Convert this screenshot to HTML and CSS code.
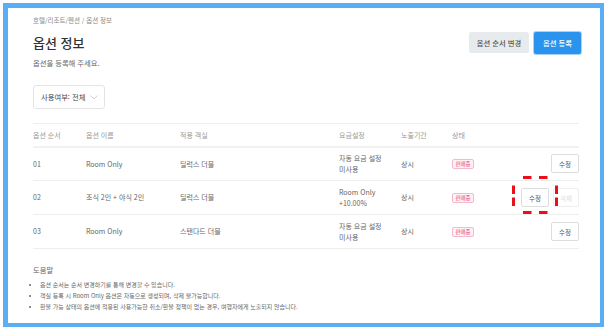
FILE: index.html
```html
<!DOCTYPE html>
<html lang="ko">
<head>
    <meta charset="UTF-8">
    <meta name="viewport" content="width=device-width, initial-scale=1.0">
    <title>옵션 정보</title>
    <link rel="stylesheet" href="styles.css">
</head>
<body>
    <div class="frame">
        <div class="page-head">
            <div>
                <div class="breadcrumb">호텔/리조트/펜션 / 옵션 정보</div>
                <h1>옵션 정보</h1>
                <p class="subtitle">옵션을 등록해 주세요.</p>
            </div>
            <div class="head-actions">
                <button class="btn btn-gray">옵션 순서 변경</button>
                <button class="btn btn-blue">옵션 등록</button>
            </div>
        </div>

        <div class="filter">
            <span>사용여부: 전체</span>
            <svg width="8" height="5" viewBox="0 0 8 5"><path d="M0.5 0.5 L4 4 L7.5 0.5" fill="none" stroke="#c4c4c4" stroke-width="0.8"/></svg>
        </div>

        <table class="option-table">
            <colgroup>
                <col style="width: 53px">
                <col style="width: 94px">
                <col style="width: 159px">
                <col style="width: 62px">
                <col style="width: 51px">
                <col style="width: 60px">
                <col>
            </colgroup>
            <thead>
                <tr>
                    <th>옵션 순서</th>
                    <th>옵션 이름</th>
                    <th>적용 객실</th>
                    <th>요금설정</th>
                    <th>노출기간</th>
                    <th>상태</th>
                    <th></th>
                </tr>
            </thead>
            <tbody>
                <tr>
                    <td>01</td>
                    <td>Room Only</td>
                    <td>딜럭스 더블</td>
                    <td>자동 요금 설정<br>미사용</td>
                    <td>상시</td>
                    <td><span class="badge">판매중</span></td>
                    <td class="actions"><button class="btn-sm">수정</button></td>
                </tr>
                <tr>
                    <td>02</td>
                    <td>조식 2인 + 야식 2인</td>
                    <td>딜럭스 더블</td>
                    <td>Room Only<br>+10.00%</td>
                    <td>상시</td>
                    <td><span class="badge">판매중</span></td>
                    <td class="actions">
                        <span class="highlight">
                            <button class="btn-sm">수정</button>
                            <!-- hand-drawn dashed marker around the edit button -->
                            <svg class="dash-box" width="46" height="38" viewBox="0 0 46 38">
                                <path d="M11 1.5 H19.5 M27 1.5 H35.5 M11 36.5 H19.5 M27 36.5 H35.5 M1.5 9.5 V18 M1.5 21.5 V30 M44.5 9.5 V18 M44.5 21.5 V30" fill="none" stroke="#e8101a" stroke-width="3"/>
                            </svg>
                        </span>
                        <button class="btn-sm disabled">삭제</button>
                    </td>
                </tr>
                <tr>
                    <td>03</td>
                    <td>Room Only</td>
                    <td>스탠다드 더블</td>
                    <td>자동 요금 설정<br>미사용</td>
                    <td>상시</td>
                    <td><span class="badge">판매중</span></td>
                    <td class="actions"><button class="btn-sm">수정</button></td>
                </tr>
            </tbody>
        </table>

        <div class="help">
            <h3>도움말</h3>
            <ul>
                <li>옵션 순서는 순서 변경하기를 통해 변경할 수 있습니다.</li>
                <li>객실 등록 시 Room Only 옵션은 자동으로 생성되며, 삭제 불가능합니다.</li>
                <li>환불 가능 상태의 옵션에 적용된 사용가능한 취소/환불 정책이 없는 경우, 여행자에게 노출되지 않습니다.</li>
            </ul>
        </div>
    </div>
</body>
</html>
```

FILE: styles.css
```css
:root {
    --frame-color: #5aaef3;
    --primary-color: #2a93ee;
    --line-color: #eeeeee;
    --text-color: #666666;
}

* {
    box-sizing: border-box;
}

body {
    font-family: "Noto Sans CJK KR", "Noto Sans", sans-serif;
    color: var(--text-color);
    background-color: #ffffff;
    margin: 0;
}

.frame {
    margin: 3px;
    height: 324px;
    border: 5px solid var(--frame-color);
    border-right-width: 4px;
    border-bottom-width: 4px;
    padding: 7px 19px 0 25px;
    overflow: hidden;
}

.page-head {
    display: flex;
    justify-content: space-between;
    align-items: flex-start;
}

.breadcrumb {
    font-size: 6.5px;
    line-height: 10px;
    color: #8a8a8a;
}

h1 {
    font-size: 13px;
    font-weight: 500;
    line-height: 18px;
    color: #333333;
    margin: 9px 0 0;
}

.subtitle {
    font-size: 7.3px;
    line-height: 10px;
    color: #666666;
    margin: 6px 0 0;
}

.head-actions {
    display: flex;
    gap: 5px;
    margin-top: 17px;
}

.btn {
    border: none;
    font-family: inherit;
    font-size: 7.3px;
    font-weight: 500;
    height: 21px;
    border-radius: 2px;
    padding: 0;
}

.btn-gray {
    width: 60px;
    background-color: #e8ebee;
    color: #555555;
}

.btn-blue {
    width: 47px;
    height: 22px;
    background-color: var(--primary-color);
    color: #ffffff;
    box-shadow: 0 0 0 1px #a6d3fa;
}

.filter {
    width: 72px;
    height: 24px;
    margin-top: 17px;
    border: 1px solid #e4e4e4;
    border-radius: 3px;
    display: flex;
    align-items: center;
    justify-content: space-between;
    padding: 0 6px 0 7px;
    font-size: 7.3px;
    color: #444444;
}

.option-table {
    width: 546px;
    margin-top: 14px;
    border-collapse: collapse;
    table-layout: fixed;
    border-top: 1px solid var(--line-color);
    font-size: 7px;
}

.option-table th {
    height: 23px;
    font-weight: 400;
    color: #999999;
    text-align: left;
    padding: 0;
    border-bottom: 2px solid #f2f2f2;
}

.option-table td {
    height: 34px;
    padding: 0;
    line-height: 10.5px;
    vertical-align: middle;
    border-bottom: 1px solid var(--line-color);
    color: var(--text-color);
}

.badge {
    display: inline-block;
    width: 22px;
    height: 10px;
    line-height: 8px;
    text-align: center;
    font-size: 5.5px;
    color: #e24a80;
    background-color: #fff1f6;
    border: 1px solid #f6b8ce;
    border-radius: 2px;
    vertical-align: middle;
}

.actions {
    text-align: right;
}

.btn-sm {
    width: 28px;
    height: 19px;
    padding: 0;
    font-family: inherit;
    font-size: 6.5px;
    color: #555555;
    background-color: #ffffff;
    border: 1px solid #dddddd;
    border-radius: 2px;
    vertical-align: middle;
}

.btn-sm.disabled {
    width: 26px;
    color: #dddddd;
    border-color: #eeeeee;
    margin-left: 2px;
}

.highlight {
    position: relative;
    display: inline-block;
    vertical-align: middle;
}

.highlight .btn-sm {
    display: block;
}

.dash-box {
    position: absolute;
    top: -12px;
    left: -9px;
}

.help {
    margin-top: 16px;
}

.help h3 {
    font-size: 7.3px;
    font-weight: 400;
    line-height: 10px;
    color: #666666;
    margin: 0;
}

.help ul {
    margin: 4px 0 0;
    padding: 0 0 0 7px;
    font-size: 6px;
    line-height: 11px;
    color: #666666;
}
```
